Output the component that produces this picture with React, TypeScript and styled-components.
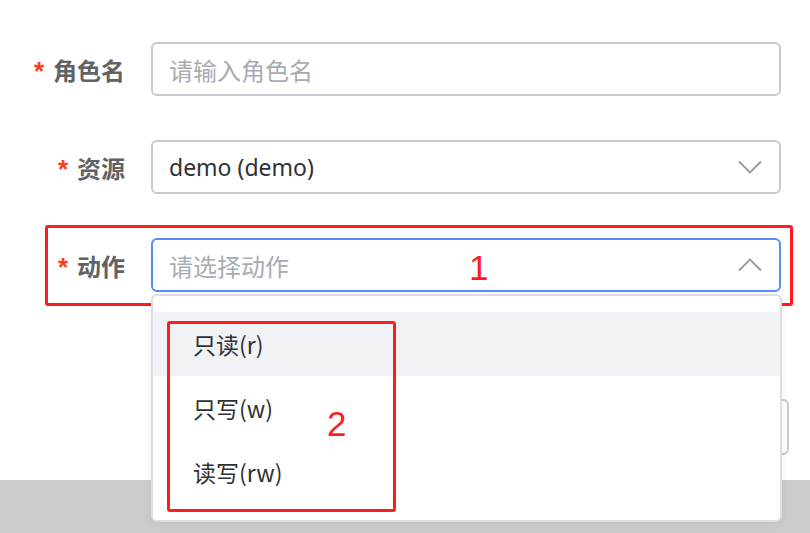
import React from 'react';
import styled, { createGlobalStyle } from 'styled-components';

const GlobalStyle = createGlobalStyle`
  html, body {
    margin: 0;
    padding: 0;
    background: #ffffff;
  }
  body {
    font-family: "Noto Sans", "Noto Sans CJK SC", sans-serif;
  }
`;

const Page = styled.div`
  width: 810px;
  height: 533px;
  display: flex;
  flex-direction: column;
  overflow: hidden;
  background: #ffffff;
`;

const Form = styled.div`
  flex: 1;
  display: flex;
  flex-direction: column;
  gap: 44px;
  padding: 42px 0 0;
`;

const Row = styled.div`
  position: relative;
  display: flex;
  align-items: center;
  gap: 26px;
  height: 54px;
`;

const Label = styled.label`
  width: 125px;
  text-align: right;
  font-size: 24px;
  font-weight: 700;
  color: #606266;
  white-space: nowrap;
  font-family: "Noto Sans CJK SC", "Noto Sans", sans-serif;
`;

const Star = styled.span`
  color: #fa3d1d;
  margin-right: 9px;
  font-size: 26px;
  font-family: "Liberation Sans", sans-serif;
  font-weight: 700;
`;

interface IField {
  focused?: boolean;
}

const Field = styled.div<IField>`
  position: relative;
  width: 630px;
  height: 54px;
  box-sizing: border-box;
  border: 2px solid ${props => (props.focused ? '#5b8cf6' : '#c6c9d1')};
  border-radius: 6px;
  display: flex;
  align-items: center;
  padding: 0 16px;
  font-size: 24px;
`;

interface IValue {
  placeholder?: boolean;
}

const Value = styled.span<IValue>`
  flex: 1;
  color: ${props => (props.placeholder ? '#a8abb2' : '#303133')};
  font-family: "Noto Sans", "Noto Sans CJK SC", sans-serif;
  font-size: ${props => (props.placeholder ? '24px' : '23px')};
  white-space: nowrap;
`;

const Chevron = styled.svg`
  width: 24px;
  height: 14px;
  margin-right: 1px;
`;

const Annotation = styled.div`
  position: absolute;
  border: 3px solid #ff1c1c;
  border-radius: 3px;
  pointer-events: none;
`;

const RowMark = styled(Annotation)`
  left: 45px;
  right: 17px;
  top: -13px;
  bottom: -14px;
`;

interface INum {
  left: number;
  top: number;
}

const Num = styled.span<INum>`
  position: absolute;
  left: ${props => props.left}px;
  top: ${props => props.top}px;
  color: #ff1c1c;
  font-size: 35px;
  line-height: 1;
  font-family: "Liberation Sans", sans-serif;
`;

const Menu = styled.div`
  position: absolute;
  left: -2px;
  top: 54px;
  width: 631px;
  box-sizing: border-box;
  padding: 16px 0;
  background: #ffffff;
  border: 2px solid #dcdee4;
  border-radius: 6px;
  box-shadow: 0 2px 10px rgba(0, 0, 0, 0.06);
  z-index: 5;
`;

interface IItem {
  hover?: boolean;
}

const Item = styled.div<IItem>`
  height: 64px;
  display: flex;
  align-items: center;
  padding-left: 40px;
  font-size: 23px;
  color: #303133;
  background: ${props => (props.hover ? '#f1f2f6' : 'transparent')};
  font-family: "Noto Sans CJK SC", "Noto Sans", sans-serif;
`;

const MenuMark = styled(Annotation)`
  left: 14px;
  top: 25px;
  width: 223px;
  height: 185px;
`;

const Actions = styled.div`
  display: flex;
  justify-content: flex-end;
  padding-right: 21px;
  margin-top: 63px;
`;

const Button = styled.div`
  width: 110px;
  height: 56px;
  box-sizing: border-box;
  border: 2px solid #c6c9d1;
  border-radius: 6px;
  background: #ffffff;
`;

const Footer = styled.div`
  height: 53px;
  background: #cccccc;
`;

const Down = () => (
  <Chevron viewBox="0 0 24 14">
    <path d="M1 1.5 L12 12.5 L23 1.5" fill="none" stroke="#999999" strokeWidth="1.8" />
  </Chevron>
);

const Up = () => (
  <Chevron viewBox="0 0 24 14">
    <path d="M1 12.5 L12 1.5 L23 12.5" fill="none" stroke="#999999" strokeWidth="1.8" />
  </Chevron>
);

const options = ['只读(r)', '只写(w)', '读写(rw)'];

const App = () => {
  return (
    <Page>
      <GlobalStyle />
      <Form>
        <Row>
          <Label>
            <Star>*</Star>角色名
          </Label>
          <Field>
            <Value placeholder>请输入角色名</Value>
          </Field>
        </Row>
        <Row>
          <Label>
            <Star>*</Star>资源
          </Label>
          <Field>
            <Value>demo (demo)</Value>
            <Down />
          </Field>
        </Row>
        <Row>
          <RowMark />
          <Label>
            <Star>*</Star>动作
          </Label>
          <Field focused>
            <Value placeholder>请选择动作</Value>
            <Up />
            <Num left={316} top={10}>1</Num>
            <Menu>
              {options.map((o, i) => (
                <Item key={o} hover={i === 0}>
                  {o}
                </Item>
              ))}
              <MenuMark />
              <Num left={174} top={110}>2</Num>
            </Menu>
          </Field>
        </Row>
        <Actions>
          <Button />
        </Actions>
      </Form>
      <Footer />
    </Page>
  );
};

export default App;
